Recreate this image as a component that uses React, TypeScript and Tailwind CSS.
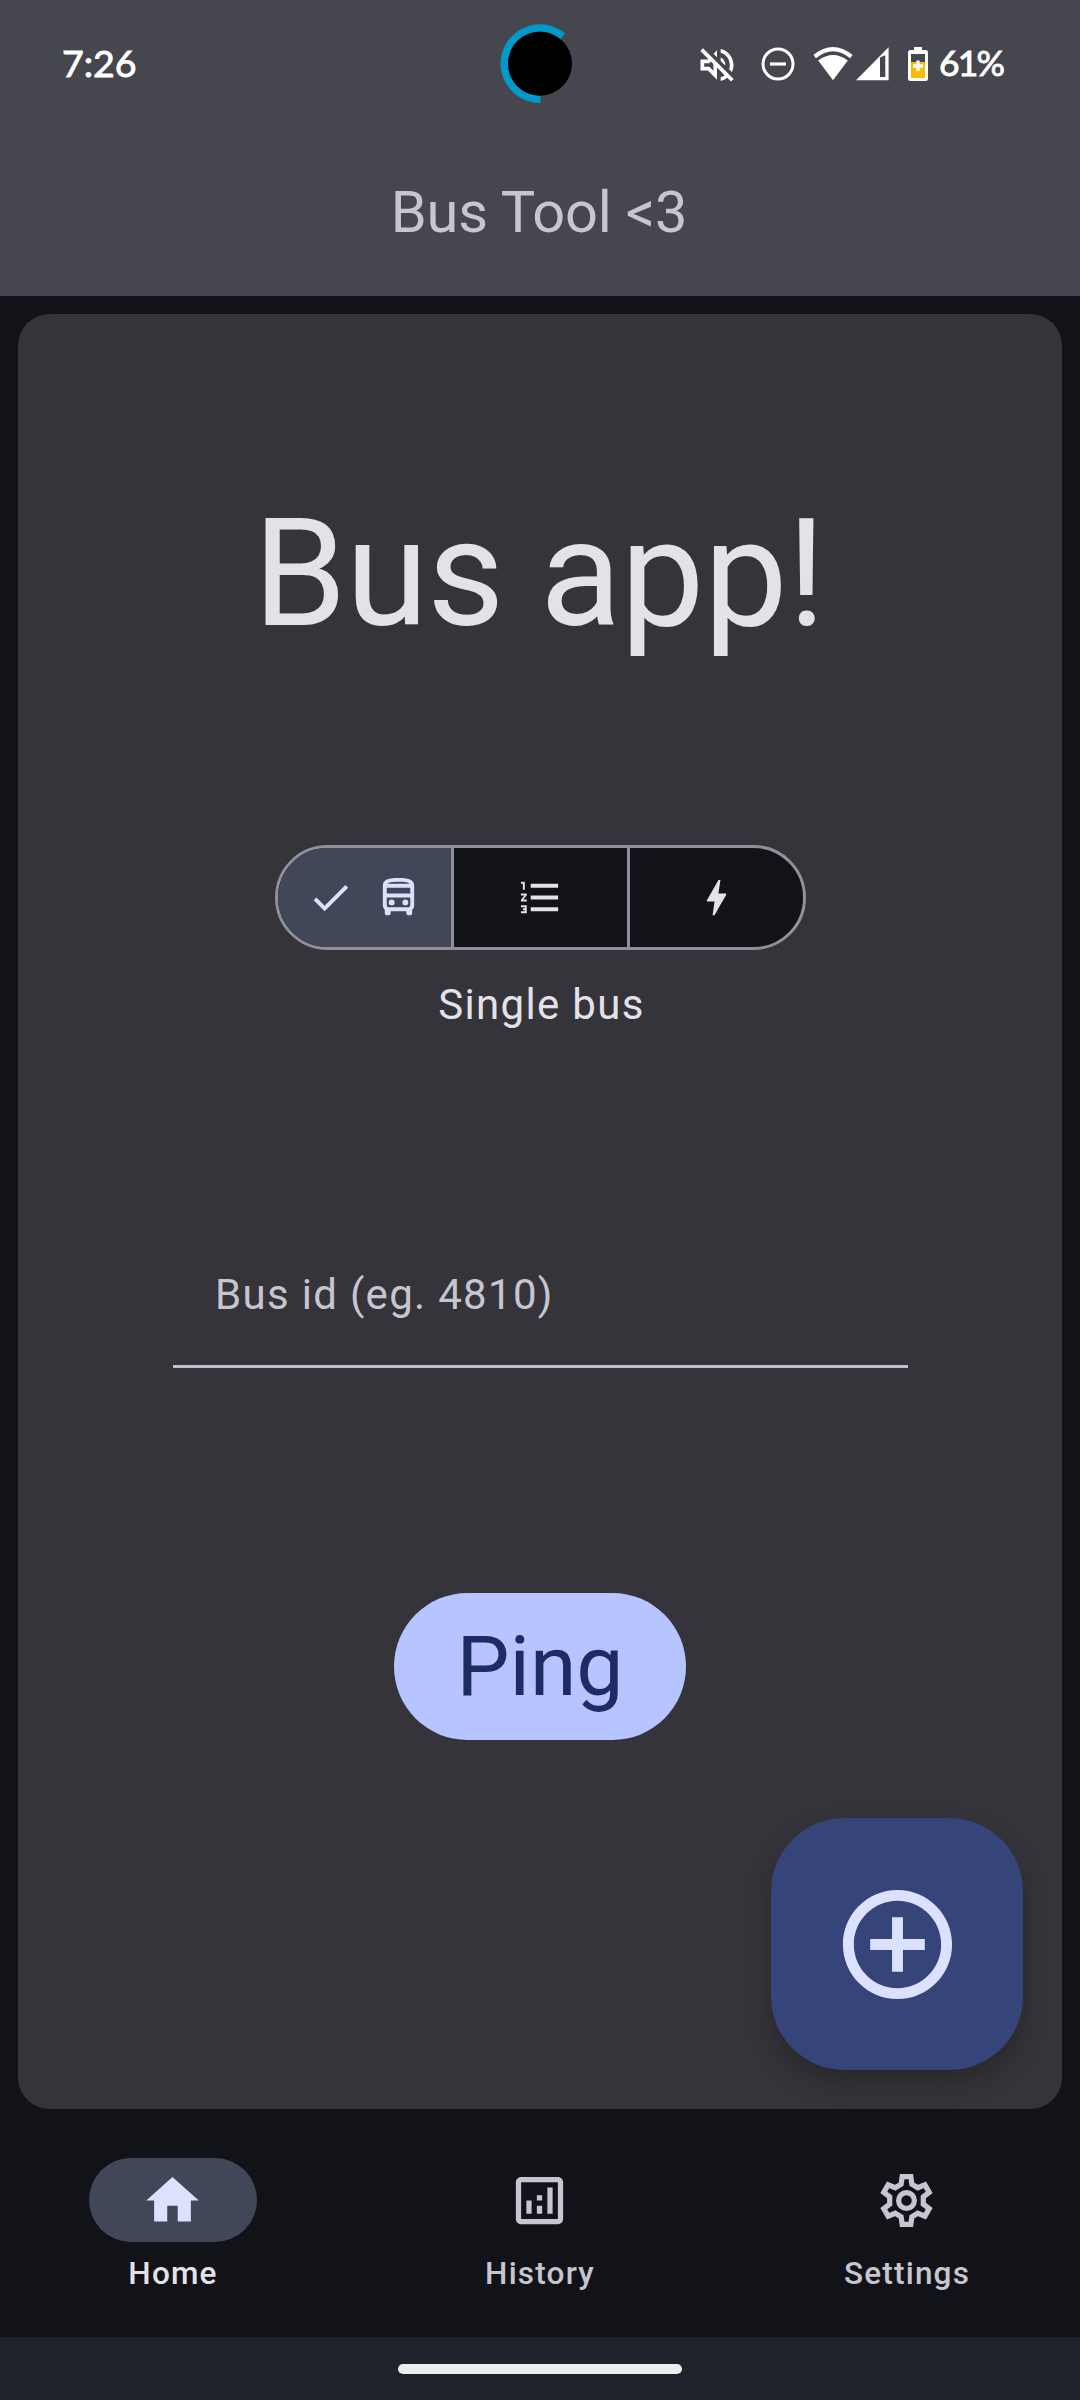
import type { ReactNode } from 'react';
import {
  MdAddCircleOutline,
  MdBolt,
  MdCheck,
  MdFormatListNumbered,
  MdHome,
  MdOutlineAnalytics,
  MdOutlineDirectionsBus,
  MdOutlineVolumeOff,
} from 'react-icons/md';

function CameraRing() {
  return (
    <svg className="absolute left-[500px] top-[23px]" width="80" height="80" viewBox="500 23 80 80">
      <path d="M540.5 99.2A35.6 35.6 0 1 1 562.7 36.3" fill="none" stroke="#0099cc" strokeWidth="7.4" />
      <circle cx="540" cy="63.7" r="32" fill="#000" />
    </svg>
  );
}

function DndIcon() {
  return (
    <svg width="34" height="34" viewBox="0 0 34 34" fill="none" stroke="#fff">
      <circle cx="17" cy="17" r="15" strokeWidth="3" />
      <path d="M9 17h16" strokeWidth="3.2" />
    </svg>
  );
}

function WifiIcon() {
  return (
    <svg width="40" height="34" viewBox="0 0 40 34">
      <path d="M1.7 9.6Q20 -5.4 38.3 9.6" fill="none" stroke="#fff" strokeWidth="4" />
      <path d="M5.2 13.4Q20 2.4 34.8 13.4L20 33.2Z" fill="#fff" />
    </svg>
  );
}

function SignalIcon() {
  return (
    <svg width="33" height="34" viewBox="0 0 33 34">
      <path fillRule="evenodd" d="M0 33.2L32.6 0.3V33.2ZM24 10.6V30H29.3V8.2Z" fill="#fff" />
    </svg>
  );
}

function BatteryIcon() {
  return (
    <svg width="20" height="34" viewBox="0 0 20 34">
      <path d="M6 0H14V3H18Q20 3 20 5.500V31.500Q20 34 17.500 34H2.500Q0 34 0 31.500V5.500Q0 3 2.500 3H6Z" fill="#fff" />
      <path d="M3 7H17V15H3Z" fill="#46464f" />
      <path d="M3 15H17V31H3Z" fill="#fbbc04" />
      <path d="M8.400 13.500H11.600V17.300H15V20.700H11.600V24H8.400V20.700H5V17.300H8.400Z" fill="#fff" />
    </svg>
  );
}

function GearIcon() {
  return (
    <svg width="63" height="63" viewBox="-12 -12 24 24" fill="none" stroke="currentColor" strokeWidth="2">
      <path d="M-1.650 -9.050L1.650 -9.050L2.050 -6.200L4.300 -4.850L7.010 -5.950L8.660 -3.100L6.400 -1.400L6.400 1.400L8.660 3.100L7.010 5.950L4.300 4.850L2.050 6.200L1.650 9.050L-1.650 9.050L-2.050 6.200L-4.300 4.850L-7.010 5.950L-8.660 3.100L-6.400 1.400L-6.400 -1.400L-8.660 -3.100L-7.010 -5.950L-4.300 -4.850L-2.050 -6.200Z" />
      <circle r="3" />
    </svg>
  );
}

function StatusBar() {
  return (
    <div className="relative flex h-[128px] items-center justify-between pl-[62px] pr-[75px] font-['Lato'] font-normal text-white">
      <span className="pb-[3px] text-[37.5px] leading-none [-webkit-text-stroke:0.9px_#fff]">7:26</span>
      <CameraRing />
      <div className="flex items-center">
        <MdOutlineVolumeOff className="mr-[22px] mt-[1px] size-[44px]" />
        <DndIcon />
        <span className="ml-[18px]"><WifiIcon /></span>
        <span className="ml-[3px]"><SignalIcon /></span>
        <span className="ml-[19px]"><BatteryIcon /></span>
        <span className="ml-[11px] w-[66px] whitespace-nowrap pb-[3px] text-[35.5px] leading-none tracking-[-1.8px] [-webkit-text-stroke:0.9px_#fff]">
          61%
        </span>
      </div>
    </div>
  );
}

function NavItem({ label, active, children }: { label: string; active?: boolean; children: ReactNode }) {
  return (
    <button className={`flex flex-1 flex-col items-center ${active ? 'text-[#e4e1e9]' : 'text-[#c7c5d0]'}`}>
      <span
        className={`flex h-[84px] w-[168px] items-center justify-center rounded-full pr-[1px] ${active ? 'bg-[#424659] text-[#dee1fc]' : ''}`}
      >
        {children}
      </span>
      <span className="mt-[11px] text-[31.5px] font-medium leading-[42px] tracking-[1.2px]">{label}</span>
    </button>
  );
}

export default function App() {
  return (
    <div className="flex h-[2400px] w-[1080px] flex-col overflow-hidden bg-[#121318] font-['Roboto',sans-serif]">
      <header className="h-[296px] shrink-0 bg-[#46464f]">
        <StatusBar />
        <h1 className="flex h-[168px] items-center justify-center pr-[2px] text-[57.75px] tracking-[-0.2px] text-[#c7c5d0]">
          Bus Tool &lt;3
        </h1>
      </header>

      <main className="relative mx-[18px] mt-[18px] flex h-[1795px] shrink-0 flex-col items-center rounded-[31.5px] bg-[#35343a] text-[#e4e1e9]">
        <h2 className="mt-[176px] pr-[2px] text-[149.6px] leading-[168px] tracking-[-0.8px]">Bus app!</h2>

        <div className="mt-[187px] flex h-[105px] w-[531px] overflow-hidden rounded-full border-[3px] border-[#90909a] bg-[#121318]">
          <button className="flex w-[176px] items-center justify-center gap-[21px] border-r-[3px] border-[#90909a] bg-[#424659] text-[#dee1fc]">
            <MdCheck className="size-[47px]" />
            <MdOutlineDirectionsBus className="size-[47px]" />
          </button>
          <button className="flex w-[176px] items-center justify-center border-r-[3px] border-[#90909a]">
            <MdFormatListNumbered className="size-[47px]" />
          </button>
          <button className="flex flex-1 items-center justify-center">
            <MdBolt className="size-[47px]" />
          </button>
        </div>
        <p className="mt-[23px] pl-[3px] text-[42px] leading-[63px] tracking-[1.31px]">Single bus</p>

        <div className="mt-[185px] flex h-[147px] w-[735px] items-center border-b-[3px] border-[#c0beca] pl-[42.5px] pt-[3px] text-[42px] tracking-[1.31px] text-[#c7c5d0]">
          Bus id (eg. 4810)
        </div>

        <button className="mt-[225px] flex h-[147px] w-[292px] items-center justify-center rounded-full bg-[#b6c4ff] text-[84px] text-[#1d2d61]">
          Ping
        </button>

        <button className="absolute bottom-[39px] right-[39px] flex size-[252px] items-center justify-center rounded-[73.5px] bg-[#354479] text-[#dce1ff] shadow-[0_12px_26px_rgba(0,0,0,0.25)]">
          <MdAddCircleOutline className="size-[131px]" />
        </button>
      </main>

      <nav className="flex h-[228px] shrink-0 gap-[21px] pt-[49px]">
        <NavItem label="Home" active>
          <MdHome className="size-[63px]" />
        </NavItem>
        <NavItem label="History">
          <MdOutlineAnalytics className="size-[63px]" />
        </NavItem>
        <NavItem label="Settings">
          <GearIcon />
        </NavItem>
      </nav>

      <div className="flex h-[63px] shrink-0 justify-center bg-[#1f222a] pt-[27px]">
        <div className="h-[10px] w-[284px] rounded-full bg-[#eceeed]" />
      </div>
    </div>
  );
}
